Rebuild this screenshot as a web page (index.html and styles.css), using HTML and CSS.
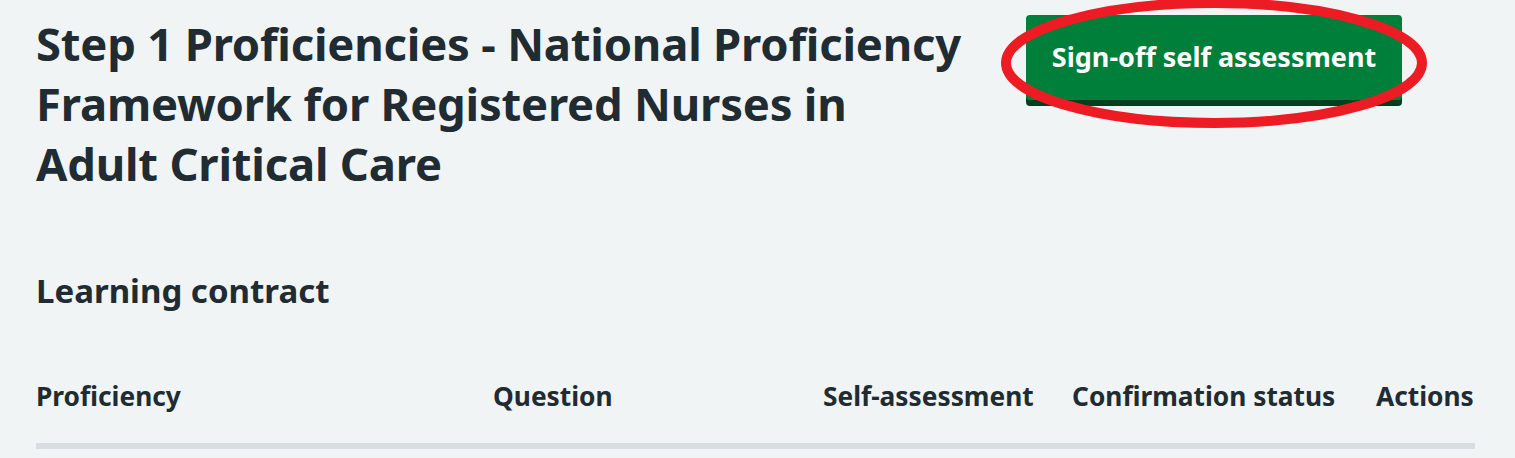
FILE: index.html
```html
<!DOCTYPE html>
<html lang="en">
<head>
<meta charset="utf-8">
<title>Step 1 Proficiencies</title>
<link rel="stylesheet" href="styles.css">
</head>
<body>
<main class="page">
  <div class="top-row">
    <h1 class="title">Step 1 Proficiencies - National Proficiency Framework for Registered Nurses in Adult Critical Care</h1>
    <div class="action">
      <button class="btn" type="button">Sign-off self assessment</button>
      <svg class="ring" width="440" height="140" viewBox="0 0 440 140" aria-hidden="true">
        <ellipse cx="220" cy="70" rx="208" ry="60" fill="none" stroke="#ed1c24" stroke-width="10"/>
      </svg>
    </div>
  </div>
  <h2 class="subtitle">Learning contract</h2>
  <table class="table">
    <thead>
      <tr>
        <th class="c1">Proficiency</th>
        <th class="c2">Question</th>
        <th class="c3">Self-assessment</th>
        <th class="c4">Confirmation status</th>
        <th class="c5">Actions</th>
      </tr>
    </thead>
  </table>
</main>
</body>
</html>
```

FILE: styles.css
```css
html, body {
  margin: 0;
  padding: 0;
  background: #f0f4f5;
}
body {
  font-family: "Noto Sans", "Open Sans", Arial, sans-serif;
  color: #212b32;
}
.page {
  padding: 0 40px 0 36px;
}
.top-row {
  display: flex;
  align-items: flex-start;
}
.title {
  width: 935px;
  flex: none;
  margin: 13px 0 0;
  font-size: 45.4px;
  line-height: 60px;
  font-weight: 700;
  letter-spacing: -0.2px;
}
.action {
  position: relative;
  margin: 15px 0 0 55px;
}
.btn {
  display: block;
  width: 376px;
  height: 85px;
  border: 0;
  border-radius: 4px;
  background: #007f3b;
  box-shadow: 0 6px 0 #00401e;
  color: #fff;
  font-family: inherit;
  font-size: 27px;
  font-weight: 700;
  padding: 0 0 2px;
}
.ring {
  position: absolute;
  left: -32px;
  top: -22px;
}
.subtitle {
  margin: 78px 0 0;
  font-size: 33px;
  line-height: 40px;
  font-weight: 700;
}
.table {
  width: 100%;
  border-collapse: collapse;
  margin-top: 64px;
}
.table th {
  text-align: left;
  font-size: 26.3px;
  font-weight: 700;
  padding: 3px 0 29px;
  border-bottom: 6px solid #d8dde0;
  white-space: nowrap;
}
.c1 { width: 457px; }
.c2 { width: 330px; }
.c3 { width: 249px; }
.c4 { width: 304px; }
```
